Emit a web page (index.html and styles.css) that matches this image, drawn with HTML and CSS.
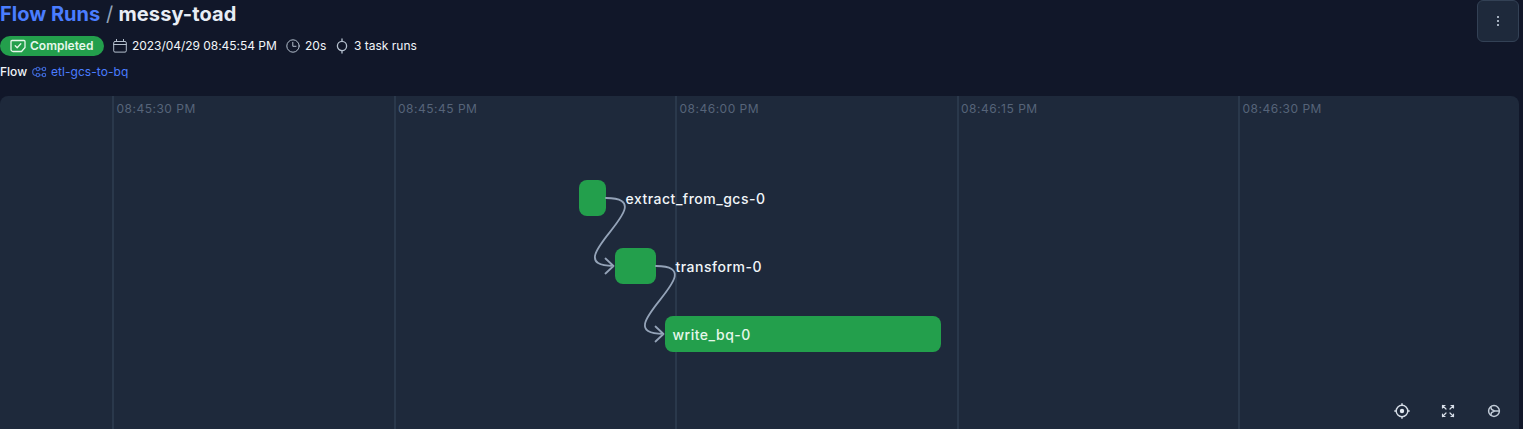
FILE: index.html
```html
<!DOCTYPE html>
<html lang="en">
<head>
<meta charset="utf-8">
<title>Flow Runs / messy-toad</title>
<link rel="stylesheet" href="styles.css">
</head>
<body>
<main class="page">
  <header class="header">
    <div class="summary">
      <h1 class="crumbs"><a class="crumb-link">Flow Runs</a><span class="slash">/</span><span class="crumb-name">messy-toad</span></h1>
      <div class="meta">
        <span class="badge">
          <svg class="badge-icon" width="16" height="14" viewBox="0 0 16 14"><path d="M2 1.500h12a1 1 0 0 1 1 1V8.500L11.500 12.500H3A2 2 0 0 1 1 10.500V2.500A1 1 0 0 1 2 1.500zM5.200 6.800l2 2 3.600-4"/></svg>
          <span class="badge-text">Completed</span>
        </span>
        <span class="item date">
          <svg class="icon" width="14" height="14" viewBox="0 0 14 14"><path d="M2 2.500h10a1.300 1.300 0 0 1 1.300 1.300v8a1.300 1.300 0 0 1-1.300 1.300H2A1.300 1.300 0 0 1 .7 11.800v-8A1.300 1.300 0 0 1 2 2.500zM.7 5.500h12.600M3.500.3v2.200M10.500.3v2.200"/></svg>
          <span class="date-text">2023/04/29 08:45:54 PM</span>
        </span>
        <span class="item duration">
          <svg class="icon" width="14" height="14" viewBox="0 0 14 14"><circle cx="7" cy="7" r="6.200"/><path d="M6.800 3.300V7.300H10"/></svg>
          <span class="duration-text">20s</span>
        </span>
        <span class="item tasks">
          <svg class="icon task-icon" width="14" height="16" viewBox="0 0 14 16"><circle cx="7" cy="8" r="4.600"/><path d="M7 1v2.200M7 12.800V15"/></svg>
          <span class="tasks-text">3 task runs</span>
        </span>
      </div>
      <div class="flow">
        <span class="flow-label">Flow</span>
        <svg class="flow-icon" width="15" height="12" viewBox="0 0 15 12"><circle cx="5.800" cy="3" r="1.700"/><circle cx="12" cy="3" r="1.700"/><circle cx="5.800" cy="9" r="1.700"/><circle cx="12" cy="9" r="1.700"/><path d="M7.500 3h2.800M7.500 9h2.800M4.100 2.500C2 2.500.7 4 .7 6S2 9.500 4.100 9.500"/></svg>
        <a class="flow-name">etl-gcs-to-bq</a>
      </div>
    </div>
    <button class="menu" aria-label="Menu"><span class="dot"></span><span class="dot"></span><span class="dot"></span></button>
  </header>

  <section class="timeline">
    <div class="ticks">
      <div class="tick"><span class="tick-text">08:45:30 PM</span></div>
      <div class="tick"><span class="tick-text">08:45:45 PM</span></div>
      <div class="tick"><span class="tick-text">08:46:00 PM</span></div>
      <div class="tick"><span class="tick-text">08:46:15 PM</span></div>
      <div class="tick"><span class="tick-text">08:46:30 PM</span></div>
    </div>
    <div class="node extract"></div>
    <div class="node transform"></div>
    <div class="node write"></div>
    <svg class="edges" width="1519" height="333" viewBox="0 0 1519 333">
      <path d="M606 102C668 102 552 170 613.500 170M605.500 162.500L613.500 170L605.500 177.500"/>
      <path d="M656 170C718 170 602 238 663.500 238M655.500 230.500L663.500 238L655.500 245.500"/>
    </svg>
    <span class="label extract-label">extract_from_gcs-0</span>
    <span class="label transform-label">transform-0</span>
    <span class="label write-label">write_bq-0</span>
    <div class="controls">
      <svg class="control" width="16" height="16" viewBox="0 0 16 16"><circle cx="8" cy="8" r="5.800"/><circle class="solid" cx="8" cy="8" r="2.200"/><path d="M8 .8v1.400M8 13.800v1.400M.8 8h1.400M13.800 8h1.400"/></svg>
      <svg class="control expand" width="16" height="16" viewBox="0 0 16 16"><path d="M2.500 5v-2.500H5M2.500 2.500l3.500 3.500M11 2.500h2.500V5M13.500 2.500L10 6M2.500 11v2.500H5M2.500 13.500L6 10M11 13.500h2.500V11M13.500 13.500L10 10"/></svg>
      <svg class="control gear" width="16" height="16" viewBox="0 0 16 16"><circle cx="8" cy="8" r="5.400"/><path d="M8.500 8h4.700M8.500 8L5.500 6.300 4.800 4M8.500 8L5.500 9.700 4.800 12"/></svg>
    </div>
  </section>
</main>
</body>
</html>
```
FILE: styles.css
```css
* { box-sizing: border-box; }
body {
  margin: 0;
  height: 429px;
  overflow: hidden;
  background: #111729;
  color: #f1f5f9;
  font-family: Inter, "Liberation Sans", sans-serif;
}
.page {
  display: flex;
  flex-direction: column;
  width: 1519px;
  height: 429px;
}
.header {
  display: flex;
  justify-content: space-between;
  align-items: flex-start;
  height: 96px;
}
.summary { display: flex; flex-direction: column; }
.crumbs {
  display: flex;
  margin: 0;
  height: 28px;
  font-size: 20px;
  line-height: 28px;
  font-weight: 700;
  white-space: nowrap;
}
.crumb-link { width: 106px; color: #4a7dff; }
.slash { width: 12.5px; color: #94a3b8; font-weight: 400; }
.crumb-name { color: #e8edf5; letter-spacing: 0.1px; }
.meta {
  display: flex;
  align-items: center;
  height: 20px;
  margin-top: 8px;
  font-size: 12px;
  line-height: 20px;
  white-space: nowrap;
}
.badge {
  display: flex;
  align-items: center;
  gap: 4px;
  width: 104px;
  height: 20px;
  padding-left: 10px;
  border-radius: 10px;
  background: #239f4c;
  color: #e6f7eb;
  font-weight: 600;
}
.badge-icon, .icon, .flow-icon, .edges, .control {
  flex: none;
  fill: none;
  stroke-linecap: round;
  stroke-linejoin: round;
}
.badge-icon { stroke: #e6f7eb; stroke-width: 1.3; }
.item { display: flex; align-items: center; gap: 5px; }
.icon { stroke: #b4bfcd; stroke-width: 1; }
.task-icon { stroke-width: 1.3; }
.date { margin-left: 9px; width: 173px; }
.date-text { letter-spacing: -0.04px; }
.duration { width: 49px; }
.flow {
  display: flex;
  align-items: center;
  height: 16px;
  margin-top: 8px;
  font-size: 12px;
  line-height: 16px;
}
.flow-label { width: 32px; font-weight: 500; }
.flow-icon { stroke: #3e68d8; stroke-width: 1.1; }
.flow-name { margin-left: 4px; color: #4a7dff; letter-spacing: 0.05px; }
.menu {
  display: flex;
  flex-direction: column;
  align-items: center;
  justify-content: center;
  gap: 2px;
  width: 42px;
  height: 42px;
  padding: 0;
  border: 1px solid #334155;
  border-radius: 6px;
  background: #1e293b;
}
.dot { width: 2px; height: 2px; background: #a3aebd; }
.timeline {
  position: relative;
  flex: 1;
  overflow: hidden;
  border-radius: 8px 8px 0 0;
  background: #1e293b;
}
.ticks {
  display: grid;
  grid-template-columns: repeat(5, 281.5px);
  height: 100%;
  padding-left: 112px;
}
.tick {
  padding: 5px 0 0 2.5px;
  border-left: 2px solid #2a384b;
  color: #566479;
  font-size: 12px;
  line-height: 16px;
  letter-spacing: 0.5px;
}
.node {
  position: absolute;
  height: 36px;
  border-radius: 8px;
  background: #239f4c;
}
.extract { left: 578.5px; top: 84px; width: 27px; }
.transform { left: 614.5px; top: 152px; width: 41px; }
.write { left: 664.5px; top: 220px; width: 276px; }
.edges {
  position: absolute;
  left: 0;
  top: 0;
  stroke: #94a3b8;
  stroke-width: 1.8;
}
.label {
  position: absolute;
  font-size: 14px;
  line-height: 20px;
  font-weight: 500;
  letter-spacing: 0.5px;
  white-space: nowrap;
}
.extract-label { left: 625.5px; top: 93px; }
.transform-label { left: 675.5px; top: 161px; }
.write-label { left: 672.5px; top: 229px; color: #e6f7eb; }
.controls {
  position: absolute;
  right: 17px;
  bottom: 10px;
  display: flex;
  gap: 30px;
}
.control { stroke: #d7dee8; stroke-width: 1.4; }
.expand { stroke-width: 1.2; }
.gear { stroke-width: 1.5; stroke: #c0cad6; }
.solid { fill: #e2e8f0; stroke: none; }
```
